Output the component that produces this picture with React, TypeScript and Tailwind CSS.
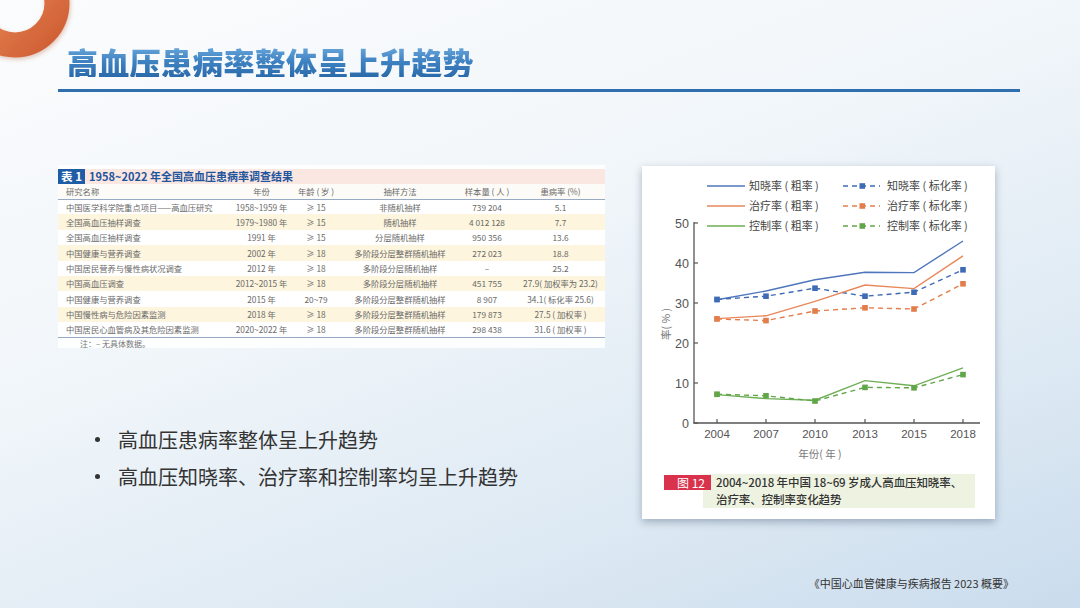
import React from "react";

const FONT = '"Noto Sans CJK SC", "Noto Sans", sans-serif';

const rows = [
  ["中国医学科学院重点项目——高血压研究", "1958~1959 年", "≥ 15", "非随机抽样", "739 204", "5.1"],
  ["全国高血压抽样调查", "1979~1980 年", "≥ 15", "随机抽样", "4 012 128", "7.7"],
  ["全国高血压抽样调查", "1991 年", "≥ 15", "分层随机抽样", "950 356", "13.6"],
  ["中国健康与营养调查", "2002 年", "≥ 18", "多阶段分层整群随机抽样", "272 023", "18.8"],
  ["中国居民营养与慢性病状况调查", "2012 年", "≥ 18", "多阶段分层随机抽样", "–", "25.2"],
  ["中国高血压调查", "2012~2015 年", "≥ 18", "多阶段分层随机抽样", "451 755", "27.9( 加权率为 23.2)"],
  ["中国健康与营养调查", "2015 年", "20~79", "多阶段分层整群随机抽样", "8 907", "34.1( 标化率 25.6)"],
  ["中国慢性病与危险因素监测", "2018 年", "≥ 18", "多阶段分层整群随机抽样", "179 873", "27.5 ( 加权率 )"],
  ["中国居民心血管病及其危险因素监测", "2020~2022 年", "≥ 18", "多阶段分层整群随机抽样", "298 438", "31.6 ( 加权率 )"],
];

const X = [75, 124, 173, 223, 272, 321];
const yv = (v: number) => 257 - 4 * v;

const series = [
  { color: "#4f76bb", dash: false, data: [30.8, 33.0, 35.8, 37.7, 37.6, 45.5] },
  { color: "#3f6bb5", dash: true, data: [30.9, 31.7, 33.7, 31.7, 32.7, 38.3] },
  { color: "#e8875a", dash: false, data: [26.1, 26.8, 30.4, 34.5, 33.6, 41.8] },
  { color: "#e37d4c", dash: true, data: [26.0, 25.6, 28.0, 28.8, 28.5, 34.8] },
  { color: "#6fae55", dash: false, data: [7.1, 6.1, 5.7, 10.6, 9.3, 13.8] },
  { color: "#62a64a", dash: true, data: [7.2, 6.8, 5.5, 8.9, 8.8, 12.1] },
];

function Chart() {
  const legend = [
    { c: "#4f76bb", d: "#3f6bb5", a: "知晓率 ( 粗率 )", b: "知晓率 ( 标化率 )" },
    { c: "#e8875a", d: "#e37d4c", a: "治疗率 ( 粗率 )", b: "治疗率 ( 标化率 )" },
    { c: "#6fae55", d: "#62a64a", a: "控制率 ( 粗率 )", b: "控制率 ( 标化率 )" },
  ];
  return (
    <svg width="353" height="308" viewBox="0 0 353 308" style={{ fontFamily: FONT }}>
      {legend.map((l, i) => {
        const y = 20 + i * 20;
        return (
          <g key={i}>
            <line x1="65" y1={y} x2="103" y2={y} stroke={l.c} strokeWidth="1.3" />
            <text x="107" y={y + 4} fontSize="11" fill="#444">{l.a}</text>
            <line x1="201" y1={y} x2="238" y2={y} stroke={l.d} strokeWidth="1.3" strokeDasharray="5 4" />
            <rect x="217.5" y={y - 2.8} width="5.6" height="5.6" fill={l.d} />
            <text x="245" y={y + 4} fontSize="11" fill="#444">{l.b}</text>
          </g>
        );
      })}
      <line x1="52" y1="56" x2="52" y2="257.6" stroke="#555" strokeWidth="1.3" />
      <line x1="51.4" y1="257" x2="338" y2="257" stroke="#555" strokeWidth="1.3" />
      {[0, 10, 20, 30, 40, 50].map((v) => (
        <g key={v}>
          <line x1="52" y1={yv(v)} x2="56" y2={yv(v)} stroke="#555" strokeWidth="1.2" />
          <text x="47" y={yv(v) + 4.5} fontSize="12.5" fill="#555" textAnchor="end" fontFamily='"Liberation Sans", sans-serif'>{v}</text>
        </g>
      ))}
      {["2004", "2007", "2010", "2013", "2015", "2018"].map((t, i) => (
        <g key={t}>
          <line x1={X[i]} y1="257" x2={X[i]} y2="253" stroke="#555" strokeWidth="1.2" />
          <text x={X[i]} y="272" fontSize="11.5" fill="#555" textAnchor="middle" fontFamily='"Liberation Sans", sans-serif'>{t}</text>
        </g>
      ))}
      <text x="178" y="292" fontSize="10.5" fill="#777" textAnchor="middle">年份( 年 )</text>
      <text transform="translate(28 158) rotate(-90)" fontSize="10.5" fill="#777" textAnchor="middle">率( % )</text>
      {series.map((s, i) => {
        const pts = s.data.map((v, j) => `${X[j]},${yv(v)}`).join(" ");
        return (
          <g key={i}>
            <polyline points={pts} fill="none" stroke={s.color} strokeWidth="1.4" strokeDasharray={s.dash ? "5 4" : undefined} />
            {s.dash &&
              s.data.map((v, j) => (
                <rect key={j} x={X[j] - 2.8} y={yv(v) - 2.8} width="5.6" height="5.6" fill={s.color} />
              ))}
            {!s.dash && (
              <rect x={X[0] - 2.5} y={yv(s.data[0]) - 2.5} width="5" height="5" fill={s.color} />
            )}
          </g>
        );
      })}
    </svg>
  );
}

export default function App() {
  return (
    <div
      className="relative w-[1080px] h-[608px] overflow-hidden flex flex-col bg-[linear-gradient(160deg,#fbfcfd_0%,#f1f6fa_40%,#dde9f3_75%,#cadced_100%)]"
      style={{ fontFamily: FONT }}
    >
      <svg className="absolute left-0 top-0" width="90" height="80" viewBox="0 0 90 80">
        <defs>
          <linearGradient id="rg" x1="0" y1="0" x2="1" y2="1">
            <stop offset="0" stopColor="#f0a27c" />
            <stop offset="0.5" stopColor="#e07a4b" />
            <stop offset="1" stopColor="#cf5e33" />
          </linearGradient>
          <filter id="sh" x="-30%" y="-30%" width="160%" height="160%">
            <feDropShadow dx="1" dy="2" stdDeviation="2" floodColor="#b0603a" floodOpacity="0.35" />
          </filter>
        </defs>
        <circle cx="15" cy="3" r="42" fill="none" stroke="url(#rg)" strokeWidth="25" filter="url(#sh)" />
      </svg>

      <div className="mt-[45px] pl-[67px] h-[33px] flex items-center">
        <h1 className="text-[31px] leading-none font-black tracking-[0.3px] bg-[linear-gradient(180deg,#6aa8dc_0%,#3f82c2_50%,#2a6aab_100%)] bg-clip-text text-transparent">
          高血压患病率整体呈上升趋势
        </h1>
      </div>
      <div className="mt-[11px] ml-[58px] w-[962px] h-[3px] bg-[#2f6fae]" />

      <div className="flex pl-[58px]">
        <div className="w-[547px] flex flex-col">
          <div className="mt-[73px] h-[183px] overflow-hidden bg-white/85">
            <div className="flex h-[19px] items-end">
              <div className="w-[27px] h-[15px] bg-[#1f5ca6] text-white text-[11.5px] font-bold leading-[15px] text-center">表 1</div>
              <div className="flex-1 h-[15px] bg-[#fbe7e1] pl-[4px] text-[11px] font-bold leading-[15px] text-[#1f559c]">
                1958~2022 年全国高血压患病率调查结果
              </div>
            </div>
            <table className="table-fixed border-collapse w-[547px] text-[8.3px] text-[#6a6a6a]">
              <colgroup>
                <col className="w-[175px]" />
                <col className="w-[57px]" />
                <col className="w-[52px]" />
                <col className="w-[116px]" />
                <col className="w-[58px]" />
                <col className="w-[89px]" />
              </colgroup>
              <thead>
                <tr className="h-[15px] border-b border-[#98a9c4] bg-[#fdfbf7]">
                  <th className="font-normal text-left pl-[8px]">研究名称</th>
                  <th className="font-normal">年份</th>
                  <th className="font-normal">年龄 ( 岁 )</th>
                  <th className="font-normal">抽样方法</th>
                  <th className="font-normal">样本量 ( 人 )</th>
                  <th className="font-normal">患病率 (%)</th>
                </tr>
              </thead>
              <tbody>
                {rows.map((r, i) => (
                  <tr key={i} className={`h-[15.4px] ${i % 2 === 1 ? "bg-[#fdf5dd]" : "bg-white"} ${i === rows.length - 1 ? "border-b-[1.5px] border-[#98a9c4]" : ""}`}>
                    <td className="text-left pl-[8px] whitespace-nowrap">{r[0]}</td>
                    {r.slice(1).map((c, j) => (
                      <td key={j} className="text-center whitespace-nowrap">{c}</td>
                    ))}
                  </tr>
                ))}
              </tbody>
            </table>
            <div className="pl-[22px] pt-[1px] text-[8px] leading-[10px] text-[#777]">注：–  无具体数据。</div>
          </div>

          <ul className="mt-[73px] pl-[37px] text-[20px] leading-[37px] text-[#333]">
            <li className="flex items-center">
              <span className="w-[23px] flex items-center">
                <span className="block w-[5px] h-[5px] rounded-full bg-[#333]" />
              </span>
              <span>高血压患病率整体呈上升趋势</span>
            </li>
            <li className="flex items-center">
              <span className="w-[23px] flex items-center">
                <span className="block w-[5px] h-[5px] rounded-full bg-[#333]" />
              </span>
              <span>高血压知晓率、治疗率和控制率均呈上升趋势</span>
            </li>
          </ul>
        </div>

        <div className="ml-[37px] mt-[74px] w-[353px] h-[353px] bg-white shadow-[0_3px_8px_rgba(40,60,90,0.35)] flex flex-col">
          <Chart />
          <div className="flex items-start h-[34px] pl-[22px]">
            <div className="relative z-10 mt-[1px] w-[47px] h-[15px] bg-[#d9324d] text-white text-[12px] leading-[15px] text-right pr-[6px]">图 12</div>
            <div className="-ml-[8px] w-[272px] h-[34px] bg-[#eef3e1] pl-[13px] text-[11.5px] leading-[17px] font-medium text-[#333] whitespace-nowrap tracking-[-0.1px]">
              <div>2004~2018 年中国 18~69 岁成人高血压知晓率、</div>
              <div>治疗率、控制率变化趋势</div>
            </div>
          </div>
        </div>
      </div>

      <div className="mt-auto pb-[17px] pr-[66px] flex justify-end">
        <span className="text-[11px] leading-[16px] text-[#333]">《中国心血管健康与疾病报告 2023 概要》</span>
      </div>
    </div>
  );
}
